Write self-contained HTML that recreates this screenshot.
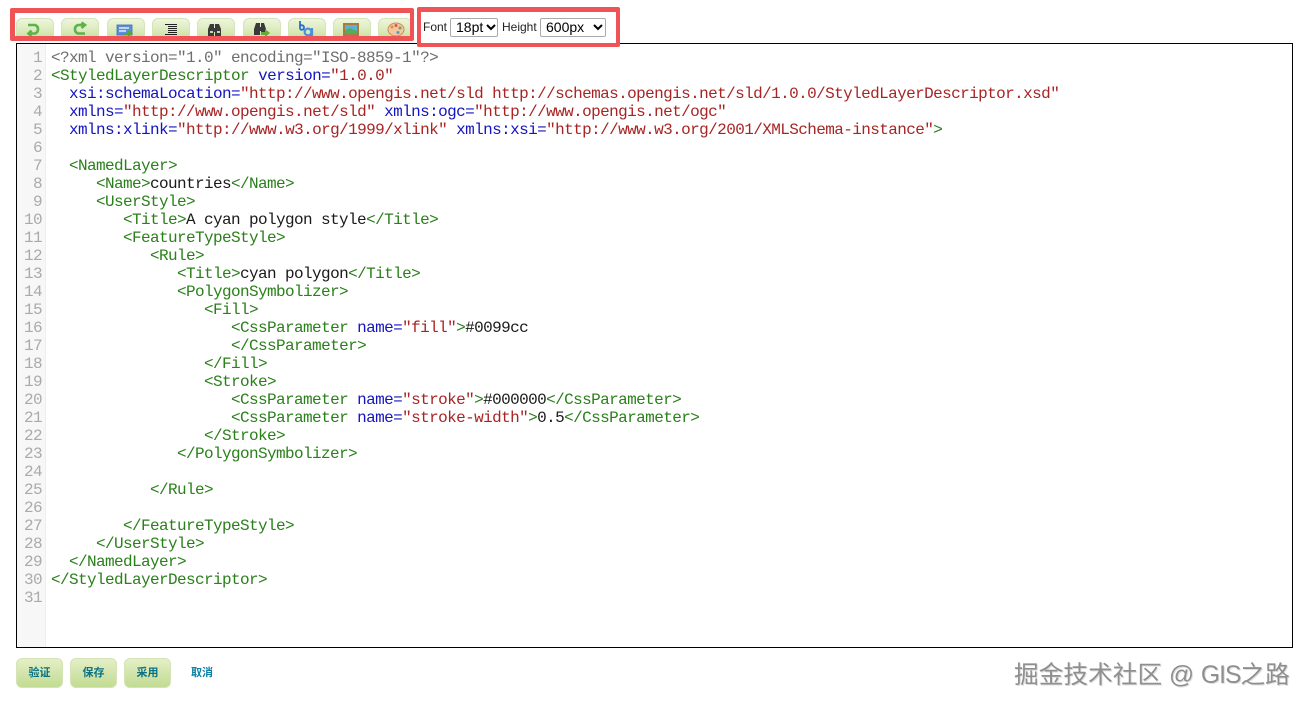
<!DOCTYPE html>
<html><head><meta charset="utf-8">
<style>
html,body{margin:0;padding:0;background:#fff;}
body{width:1311px;height:710px;overflow:hidden;position:relative;font-family:"Liberation Sans","Noto Sans CJK SC",sans-serif;}
.abs{position:absolute;}
.tb{position:absolute;top:18px;width:38px;height:22px;box-sizing:border-box;border:1px solid #d5e3b8;border-bottom:0;border-radius:6px 6px 0 0;background:linear-gradient(#eef5dc,#d8e9b8 60%,#c2dc94);}
.red{position:absolute;box-sizing:border-box;border:solid #f05356;border-radius:2px;z-index:5;}
.sel{position:absolute;top:18px;height:19px;box-sizing:border-box;border:1px solid #aaa;border-radius:2px;background:#fff;font-size:14px;line-height:17px;color:#000;padding-left:5px;}
.sel svg{position:absolute;top:5px;width:10px;height:7px;}
.lab{position:absolute;top:20px;font-size:12px;line-height:15px;color:#222;}
#icons{position:absolute;left:0;top:0;width:1311px;height:42px;z-index:3;}
#ed{position:absolute;left:16px;top:43px;width:1277px;height:605px;box-sizing:border-box;border:1px solid #000;background:#fff;overflow:hidden;}
#gut{position:absolute;left:0;top:0;width:28px;height:603px;background:#f7f7f7;border-right:1px solid #eee;}
pre{margin:0;position:absolute;font-size:16px;letter-spacing:-.6px;line-height:18px;font-family:"Liberation Mono",monospace;}
#nums{left:0;top:5px;width:25px;text-align:right;color:#aaa;}
#code{left:34px;top:5px;color:#1a1a1a;}
.p{color:#6e6e6e}.t{color:#2a801a}.a{color:#1414c0}.s{color:#a82424}
.bb{position:absolute;top:658px;width:47px;height:30px;box-sizing:border-box;border:1px solid #d6e3b5;border-radius:6px;background:linear-gradient(#e4efc8,#cfe3a6 60%,#c2dc92);color:#0b7285;font-size:11px;font-weight:bold;line-height:29px;text-align:center;}
#wm{position:absolute;left:1014px;top:659px;font-size:24.7px;line-height:34px;color:#8f8f8f;white-space:nowrap;text-shadow:1px 1px 0 #ddd;}
#wm span{letter-spacing:-1px;}
</style></head>
<body>
<div class="tb" style="left:16px"></div>
<div class="tb" style="left:61px"></div>
<div class="tb" style="left:107px"></div>
<div class="tb" style="left:152px"></div>
<div class="tb" style="left:197px"></div>
<div class="tb" style="left:243px"></div>
<div class="tb" style="left:288px"></div>
<div class="tb" style="left:333px"></div>
<div class="tb" style="left:378px;width:34px"></div>

<svg id="icons" viewBox="0 0 1311 42">
<path d="M28 25H35A4.5 4.5 0 0 1 35 33.5H29M31.5 30.5L28.5 33.5L31.5 36" fill="none" stroke="#5cb44a" stroke-width="2.6"/>
<path d="M85 33.5H78A4.5 4.5 0 0 1 78 25H84M81.5 22.5L85 25L81.5 28" fill="none" stroke="#5cb44a" stroke-width="2.6"/>
<rect x="117" y="25" width="15" height="10" fill="#5b8fdc" stroke="#3d6cb8" stroke-width=".8"/>
<path d="M119 28h10M119 31h7" stroke="#e4ecff" stroke-width="1.6"/>
<path d="M124 33h4v-3l5 3.5-5 3.5v-2h-4z" fill="#55a838"/>
<path d="M165 24.5h12M168 26.5h9M168 28.5h9M168 30.5h9M168 32.5h9M165 34.5h12" stroke="#222" stroke-width="1"/>
<path d="M208 36V29L210 24H214V36ZM215 36V24H219L221 29V36ZM214 28H215V32H214Z" fill="#3a3a3a"/>
<path d="M210 32h3M217 32h3" stroke="#c8d4b0" stroke-width="2"/>
<path d="M254 35V29L256 23H260V35ZM261 35V23H264L266 29V33H261ZM260 27H261V31H260Z" fill="#3a3a3a"/>
<path d="M261 32h4v-3l5 4-5 4v-2h-4z" fill="#62ad36"/>
<path d="M300 21v8M300 26a2.3 2.3 0 1 1 0 3" fill="none" stroke="#2a6fd0" stroke-width="1.8"/>
<circle cx="308" cy="32" r="3.4" fill="none" stroke="#4a90e0" stroke-width="2.2"/>
<path d="M312 28v7l-2 2" fill="none" stroke="#4a90e0" stroke-width="2.2"/>
<rect x="343" y="23" width="16" height="13" fill="#a87c3c"/>
<rect x="345" y="25" width="12" height="9" fill="#5fb0d8"/>
<path d="M345 34V30l5-2 7 3v3z" fill="#54ad5e"/>
<ellipse cx="396" cy="29.5" rx="8" ry="6.5" fill="#f3c8a0" stroke="#d08c58"/>
<circle cx="392" cy="27" r="1.5" fill="#d9913a"/><circle cx="396" cy="25.5" r="1.5" fill="#e0524f"/><circle cx="400" cy="28" r="1.5" fill="#6aa655"/><circle cx="398" cy="32.5" r="1.5" fill="#5599cc"/>
</svg>

<div class="red" style="left:10px;top:8px;width:404px;height:33px;border-width:5px 4px 5px 5px"></div>
<div class="red" style="left:417px;top:7px;width:203px;height:40px;border-width:5px 4px 4px 4px"></div>

<div class="lab" style="left:423px">Font</div>
<div class="sel" style="left:450px;width:48px">18pt<svg style="left:35px" viewBox="0 0 10 7"><path d="M1 1L5 5L9 1" fill="none" stroke="#000" stroke-width="2"/></svg></div>
<div class="lab" style="left:502px">Height</div>
<div class="sel" style="left:540px;width:66px">600px<svg style="left:52px" viewBox="0 0 10 7"><path d="M1 1L5 5L9 1" fill="none" stroke="#000" stroke-width="2"/></svg></div>

<div id="ed"><div id="gut"></div>
<pre id="nums">1
2
3
4
5
6
7
8
9
10
11
12
13
14
15
16
17
18
19
20
21
22
23
24
25
26
27
28
29
30
31</pre>
<pre id="code"><span class="p">&lt;?xml version="1.0" encoding="ISO-8859-1"?&gt;</span>
<span class="t">&lt;StyledLayerDescriptor</span> <span class="a">version=</span><span class="s">"1.0.0"</span>
  <span class="a">xsi:schemaLocation=</span><span class="s">"http://www.opengis.net/sld http://schemas.opengis.net/sld/1.0.0/StyledLayerDescriptor.xsd"</span>
  <span class="a">xmlns=</span><span class="s">"http://www.opengis.net/sld"</span> <span class="a">xmlns:ogc=</span><span class="s">"http://www.opengis.net/ogc"</span>
  <span class="a">xmlns:xlink=</span><span class="s">"http://www.w3.org/1999/xlink"</span> <span class="a">xmlns:xsi=</span><span class="s">"http://www.w3.org/2001/XMLSchema-instance"</span><span class="t">&gt;</span>

  <span class="t">&lt;NamedLayer&gt;</span>
     <span class="t">&lt;Name&gt;</span>countries<span class="t">&lt;/Name&gt;</span>
     <span class="t">&lt;UserStyle&gt;</span>
        <span class="t">&lt;Title&gt;</span>A cyan polygon style<span class="t">&lt;/Title&gt;</span>
        <span class="t">&lt;FeatureTypeStyle&gt;</span>
           <span class="t">&lt;Rule&gt;</span>
              <span class="t">&lt;Title&gt;</span>cyan polygon<span class="t">&lt;/Title&gt;</span>
              <span class="t">&lt;PolygonSymbolizer&gt;</span>
                 <span class="t">&lt;Fill&gt;</span>
                    <span class="t">&lt;CssParameter</span> <span class="a">name=</span><span class="s">"fill"</span><span class="t">&gt;</span>#0099cc
                    <span class="t">&lt;/CssParameter&gt;</span>
                 <span class="t">&lt;/Fill&gt;</span>
                 <span class="t">&lt;Stroke&gt;</span>
                    <span class="t">&lt;CssParameter</span> <span class="a">name=</span><span class="s">"stroke"</span><span class="t">&gt;</span>#000000<span class="t">&lt;/CssParameter&gt;</span>
                    <span class="t">&lt;CssParameter</span> <span class="a">name=</span><span class="s">"stroke-width"</span><span class="t">&gt;</span>0.5<span class="t">&lt;/CssParameter&gt;</span>
                 <span class="t">&lt;/Stroke&gt;</span>
              <span class="t">&lt;/PolygonSymbolizer&gt;</span>

           <span class="t">&lt;/Rule&gt;</span>

        <span class="t">&lt;/FeatureTypeStyle&gt;</span>
     <span class="t">&lt;/UserStyle&gt;</span>
  <span class="t">&lt;/NamedLayer&gt;</span>
<span class="t">&lt;/StyledLayerDescriptor&gt;</span></pre>
</div>

<div class="bb" style="left:16px">验证</div>
<div class="bb" style="left:70px">保存</div>
<div class="bb" style="left:124px">采用</div>
<div class="abs" style="left:191px;top:666px;font-size:11px;font-weight:bold;line-height:15px;color:#0b7fa5">取消</div>
<div id="wm">掘金技术社区 @ <span>GIS</span>之路</div>
</body></html>
